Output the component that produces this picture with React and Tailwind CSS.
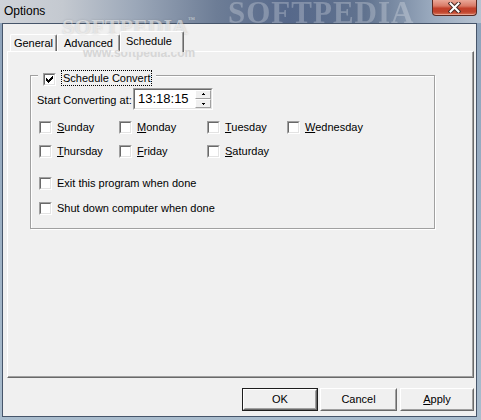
const ui = "font-['Liberation_Sans',Arial,sans-serif]"
const serif = "font-['Liberation_Serif','Times_New_Roman',serif]"

function Tick() {
  return (
    <svg width="7" height="7" viewBox="0 0 7 7" shapeRendering="crispEdges">
      <path
        d="M0 2h1v3h-1z M1 3h1v3h-1z M2 4h1v3h-1z M3 3h1v3h-1z M4 2h1v3h-1z M5 1h1v3h-1z M6 0h1v3h-1z"
        fill="#000"
      />
    </svg>
  )
}

function Box({ checked }) {
  return (
    <span className="flex h-[13px] w-[13px] shrink-0 border border-t-[#a0a0a0] border-l-[#a0a0a0] border-r-white border-b-white">
      <span className="flex flex-1 items-center justify-center border border-t-[#696969] border-l-[#696969] border-r-[#e3e3e3] border-b-[#e3e3e3] bg-white">
        {checked && <Tick />}
      </span>
    </span>
  )
}

function Check({ first, rest, plain }) {
  return (
    <label className="flex h-[13px] items-center gap-[5px] whitespace-nowrap">
      <Box />
      {plain ? (
        <span className="leading-[13px]">{plain}</span>
      ) : (
        <span className="leading-[13px]">
          <span className="underline underline-offset-[1px]">{first}</span>
          {rest}
        </span>
      )}
    </label>
  )
}

function Tab({ label, width, selected }) {
  if (selected) {
    return (
      <div
        className={`relative z-10 -mb-px flex h-[21px] ${width} items-center rounded-t-[2px] border-l border-t border-r border-l-white border-t-white border-r-[#696969] bg-[#f0f0f0] pb-[2px] pl-[5px] shadow-[inset_-1px_0_0_#a0a0a0]`}
      >
        {label}
      </div>
    )
  }
  return (
    <div
      className={`flex h-[17px] ${width} items-center justify-center rounded-t-[2px] border-l border-t border-r border-l-white border-t-white border-r-[#696969] shadow-[inset_-1px_0_0_#a0a0a0]`}
    >
      {label}
    </div>
  )
}

function Btn({ children, width, isDefault }) {
  return (
    <button
      type="button"
      className={`flex h-[23px] ${width} ${isDefault ? 'border border-[#1e1e1e]' : ''}`}
    >
      <span className="flex flex-1 border border-t-white border-l-white border-r-[#696969] border-b-[#696969]">
        <span className="flex flex-1 items-center justify-center border border-t-[#f0f0f0] border-l-[#f0f0f0] border-r-[#a0a0a0] border-b-[#a0a0a0] leading-[13px]">
          {children}
        </span>
      </span>
    </button>
  )
}

function SpinHalf({ up }) {
  return (
    <span className="flex h-[9px] items-center justify-center border border-t-white border-l-white border-r-[#a0a0a0] border-b-[#a0a0a0] bg-[#f0f0f0]">
      <svg width="5" height="3" viewBox="0 0 5 3" shapeRendering="crispEdges">
        <path d={up ? 'M2 0h1v1h-1z M1 1h3v1h-3z' : 'M1 1h3v1h-3z M2 2h1v1h-1z'} fill="#000" />
      </svg>
    </span>
  )
}

export default function App() {
  return (
    <div
      className={`relative flex h-[420px] w-[481px] flex-col overflow-hidden bg-[linear-gradient(180deg,#8da2ba,#a9bccd)] ${ui} text-[11px] text-black`}
    >
      {/* title bar */}
      <div className="flex h-[23px] shrink-0 items-start bg-[linear-gradient(90deg,#cfd3d9_0%,#c4c9d0_13%,#9ca8b9_28%,#6d7d96_45%,#56688a_60%,#61738f_76%,#9babbf_90%,#b7c3d1_100%)]">
        <span className="pl-[4px] pt-[3px] text-[12px] leading-[16px]">Options</span>
        <button
          type="button"
          className="ml-auto mr-[4px] flex h-[16px] w-[45px] items-center justify-center rounded-b-[4px] border border-t-0 border-[#5a2a22] bg-[linear-gradient(180deg,#eaa898_0%,#d97a66_40%,#c2402a_55%,#c0442c_80%,#dc7a5e_100%)] shadow-[inset_0_-1px_0_rgba(255,255,255,0.35)]"
        >
          <svg width="13" height="11" viewBox="0 0 13 11">
            <path d="M2.5 1.5l8 8M10.5 1.5l-8 8" stroke="#4a2a26" strokeWidth="4" strokeLinecap="square" />
            <path d="M2.5 1.5l8 8M10.5 1.5l-8 8" stroke="#fff" strokeWidth="2" strokeLinecap="square" />
          </svg>
        </button>
      </div>

      {/* client area */}
      <div className="mb-[3px] ml-[2px] mr-[4px] flex flex-1 flex-col border border-[#46556a] bg-[#f0f0f0] pl-[4px] pt-[7px]">
        <div className="flex h-[20px] items-end pl-[3px]">
          <Tab label="General" width="w-[47px]" />
          <Tab label="Advanced" width="w-[63px]" />
          <Tab label="Schedule" width="w-[64px]" selected />
        </div>

        <div className="h-[327px] w-[467px] border border-t-white border-l-white border-r-[#696969] border-b-[#696969] pl-[22px] pt-[23px] shadow-[inset_-1px_-1px_0_#a0a0a0]">
          <div className="relative w-[405px] border border-[#a0a0a0] pb-[13px] pt-[12px] shadow-[inset_1px_1px_0_#fff,1px_1px_0_#fff]">
            <div className="absolute left-[7px] top-[-7px] flex h-[17px] items-start bg-[#f0f0f0] pl-[5px] pr-[4px]">
              <span className="mt-[4px]">
                <Box checked />
              </span>
              <span className="ml-[5px] mt-[1px] h-[16px] border border-dotted border-black px-px leading-[14px] whitespace-nowrap">
                Schedule Convert
              </span>
            </div>

            <div className="flex h-[22px] items-center pl-[6px]">
              <span className="w-[96px] whitespace-nowrap pt-[2px]">Start Converting at:</span>
              <div className="flex h-[22px] w-[80px] border border-t-[#a0a0a0] border-l-[#a0a0a0] border-r-white border-b-white">
                <div className="flex flex-1 border border-t-[#696969] border-l-[#696969] border-r-[#e3e3e3] border-b-[#e3e3e3] bg-white">
                  <span className="flex-1 pl-[3px] text-[13px] leading-[18px]">13:18:15</span>
                  <span className="flex w-[16px] flex-col">
                    <SpinHalf up />
                    <SpinHalf />
                  </span>
                </div>
              </div>
            </div>

            <div className="mt-[11px] grid grid-cols-[80px_88px_80px_auto] gap-y-[11px] pl-[8px]">
              <Check first="S" rest="unday" />
              <Check first="M" rest="onday" />
              <Check first="T" rest="uesday" />
              <Check first="W" rest="ednesday" />
              <Check first="T" rest="hursday" />
              <Check first="F" rest="riday" />
              <Check first="S" rest="aturday" />
            </div>

            <div className="mt-[19px] pl-[8px]">
              <Check plain="Exit this program when done" />
            </div>
            <div className="mt-[12px] pl-[8px]">
              <Check plain="Shut down computer when done" />
            </div>
          </div>
        </div>

        <div className="mt-[10px] flex justify-end pr-[2px]">
          <Btn width="w-[76px]" isDefault>
            OK
          </Btn>
          <span className="ml-[2px]" />
          <Btn width="w-[77px]">Cancel</Btn>
          <span className="ml-[3px]" />
          <Btn width="w-[74px]">
            <span className="underline underline-offset-[1px]">A</span>pply
          </Btn>
        </div>
      </div>

      {/* softpedia watermarks */}
      <span
        className={`pointer-events-none absolute left-[228px] top-[-3px] ${serif} text-[31px] font-bold leading-[31px] tracking-[1px] text-white/25 blur-[0.6px]`}
      >
        SOFTPEDIA
      </span>
      <span
        className={`pointer-events-none absolute left-[62px] top-[15px] ${serif} text-[22px] font-bold leading-[24px] text-white/50 [text-shadow:0_0_2px_rgba(110,110,110,0.35)]`}
      >
        SOFTPEDIA
        <span className="align-top text-[7px] leading-[10px]">™</span>
      </span>
      <span className="pointer-events-none absolute left-[83px] top-[46px] text-[12px] font-bold leading-[14px] text-[#d6d6d6]">
        www.softpedia.com
      </span>
    </div>
  )
}
